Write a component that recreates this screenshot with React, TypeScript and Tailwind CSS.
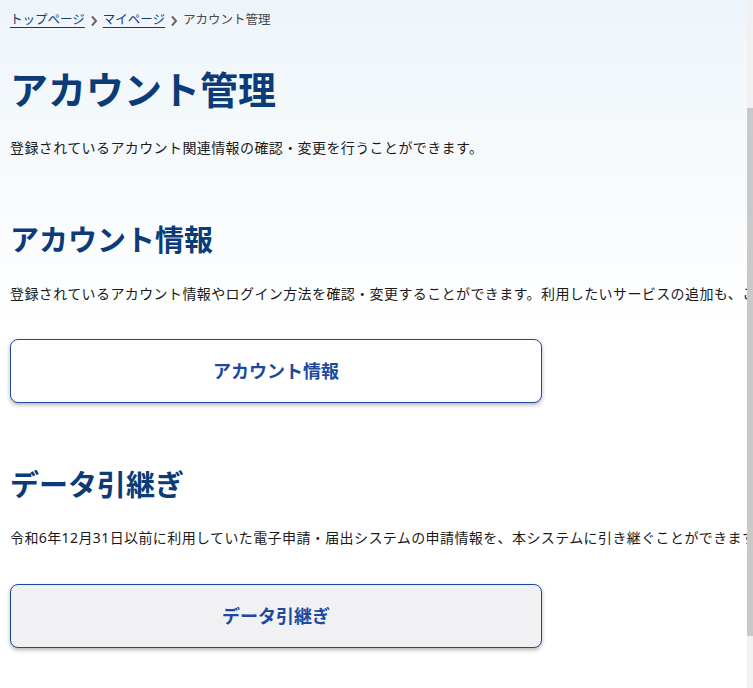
const font = "font-['Noto_Sans','Noto_Sans_CJK_JP',sans-serif]";

const Chevron: React.FC = () => (
  <svg width="10" height="12" viewBox="0 0 10 12" className="mx-[4px] mt-[1px]">
    <path d="M3 1.5 L7 6 L3 10.5" fill="none" stroke="#666" strokeWidth="2" />
  </svg>
);

const Breadcrumb: React.FC = () => (
  <nav className="flex items-center pl-[10px] pt-[11px] text-[12.5px] leading-[18px]">
    <a className="text-[#0b3c78] underline underline-offset-[3px]">トップページ</a>
    <Chevron />
    <a className="text-[#0b3c78] underline underline-offset-[3px]">マイページ</a>
    <Chevron />
    <span className="text-[#4a4a4a]">アカウント管理</span>
  </nav>
);

const LinkButton: React.FC<{ label: string; gray?: boolean }> = ({ label, gray }) => (
  <button
    className={
      gray
        ? "flex h-[64px] w-[532px] items-center justify-center rounded-[8px] border border-[#1d4a9e] bg-[#f1f1f4] text-[18px] font-bold text-[#1d4a9e] shadow-[0_2px_4px_rgba(0,0,0,0.3)]"
        : "flex h-[64px] w-[532px] items-center justify-center rounded-[8px] border border-[#1d4a9e] bg-white text-[18px] font-bold text-[#1d4a9e] shadow-[0_2px_4px_rgba(0,0,0,0.3)]"
    }
  >
    {label}
  </button>
);

const App: React.FC = () => {
  return (
    <div className={`flex h-[688px] w-[753px] overflow-hidden ${font}`}>
      <main className="h-full w-[747px] overflow-hidden whitespace-nowrap bg-[linear-gradient(180deg,#eef5fa_0px,#ffffff_330px)] text-[#1a1a1a]">
        <Breadcrumb />
        <div className="px-[10px]">
          <h1 className="mt-[34px] text-[38px] font-bold leading-[52px] text-[#0b3c78]">アカウント管理</h1>
          <p className="mt-[21px] text-[14px] leading-[24px] tracking-[0.4px]">
            登録されているアカウント関連情報の確認・変更を行うことができます。
          </p>

          <h2 className="mt-[60px] text-[29px] font-bold leading-[40px] text-[#0b3c78]">アカウント情報</h2>
          <p className="mt-[22px] text-[14px] leading-[24px] tracking-[0.4px]">
            登録されているアカウント情報やログイン方法を確認・変更することができます。利用したいサービスの追加も、こちらから行うことができます。
          </p>
          <div className="mt-[33px]">
            <LinkButton label="アカウント情報" />
          </div>

          <h2 className="mt-[62px] text-[29px] font-bold leading-[40px] text-[#0b3c78]">データ引継ぎ</h2>
          <p className="mt-[21px] text-[14px] leading-[24px] tracking-[0.4px]">
            令和6年12月31日以前に利用していた電子申請・届出システムの申請情報を、本システムに引き継ぐことができます。
          </p>
          <div className="mt-[34px]">
            <LinkButton label="データ引継ぎ" gray />
          </div>
        </div>
      </main>
      <div className="h-full w-[6px] bg-[#f1f1f1]">
        <div className="mt-[108px] h-[528px] w-full bg-[#c9c9c9]" />
      </div>
    </div>
  );
};

export default App;
